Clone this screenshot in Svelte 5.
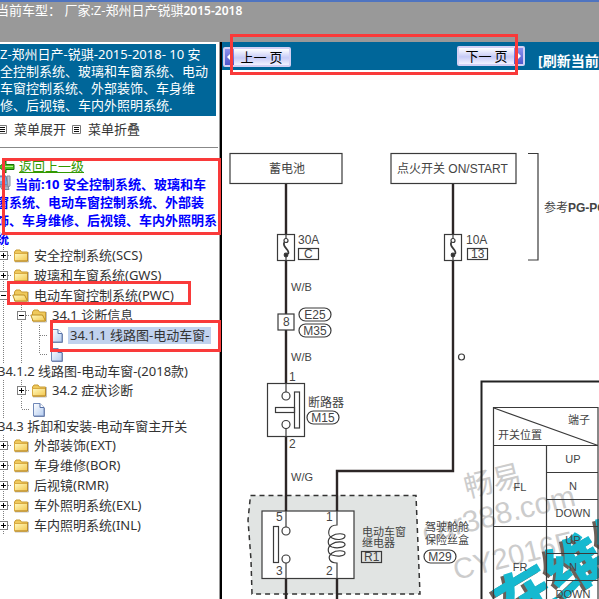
<script>
  const current = ['当前:10 安全控制系统、玻璃和车', '窗系统、电动车窗控制系统、外部装', '饰、车身维修、后视镜、车内外照明系', '统'];

  // cells: v = vertical guide, t = tee, l = elbow, + / - = toggles
  const rows = [
    { cells: ['+'], icon: 'folder', label: '安全控制系统(SCS)' },
    { cells: ['+'], icon: 'folder', label: '玻璃和车窗系统(GWS)' },
    { cells: ['-'], icon: 'open', label: '电动车窗控制系统(PWC)' },
    { cells: ['v', '-'], icon: 'open', label: '34.1 诊断信息' },
    { cells: ['v', 'v', 't'], icon: 'doc', label: '34.1.1 线路图-电动车窗-', selected: true },
    { cells: ['v', 'v', 'l'], icon: 'doc', wrapped: '34.1.2 线路图-电动车窗-(2018款)' },
    { cells: ['v', '+'], icon: 'folder', label: '34.2 症状诊断' },
    { cells: ['v', 'l'], icon: 'doc', wrapped: '34.3 拆卸和安装-电动车窗主开关' },
    { cells: ['+'], icon: 'folder', label: '外部装饰(EXT)' },
    { cells: ['+'], icon: 'folder', label: '车身维修(BOR)' },
    { cells: ['+'], icon: 'folder', label: '后视镜(RMR)' },
    { cells: ['+'], icon: 'folder', label: '车外照明系统(EXL)' },
    { cells: ['+'], icon: 'folder', label: '车内照明系统(INL)' }
  ];

  const positions = [
    { text: 'UP', y: 463 },
    { text: 'N', y: 490 },
    { text: 'DOWN', y: 517 },
    { text: 'UP', y: 544 },
    { text: 'N', y: 571 },
    { text: 'DOWN', y: 598 }
  ];
  const pills = [
    { text: 'E25', x: 299, y: 308 },
    { text: 'M35', x: 299, y: 324 },
    { text: 'M15', x: 307, y: 411 },
    { text: 'M29', x: 424, y: 550 }
  ];
</script>

{#snippet guide(kind)}
  <svg class="guide" viewBox="0 0 18 20" width="18" height="20" aria-hidden="true">
    <path d={kind === 'l' ? 'M9.5 0V10' : 'M9.5 0V20'} />
    {#if kind !== 'v'}<path d="M10 10.5H18" />{/if}
  </svg>
{/snippet}

{#snippet icon(kind)}
  <svg class="icon" viewBox="0 0 18 18" width="18" height="18" aria-hidden="true">
    {#if kind === 'doc'}
      <path d="M3.5 3.5H10L14 7.5V16H3.5Z" fill="url(#paper)" stroke="#7088b8" />
      <path d="M10 3.5V7.5H14" fill="#fff" stroke="#5570a8" />
      <path d="M4 16.5H14.5V8" fill="none" stroke="#40588f" stroke-width=".6" />
    {:else}
      <path d="M3 16H16.5V6" fill="none" stroke="#999" opacity=".6" />
      <path d="M2.5 15V6L4 4H8L9.5 6H15.5V15Z" fill="#efc95b" stroke="#c79a32" />
      {#if kind === 'open'}
        <path d="M3 15L.8 9H12.5L15.5 15Z" fill="url(#gold)" stroke="#bd8e22" />
      {:else}
        <path d="M2.5 7.5H15.5V15H2.5Z" fill="url(#gold)" stroke="#d9ab41" />
        <path d="M3 15H15.5V7" fill="none" stroke="#b98b2e" />
      {/if}
    {/if}
  </svg>
{/snippet}

{#snippet listIcon()}
  <svg viewBox="0 0 9 9" width="9" height="9" aria-hidden="true">
    <path d="M.5 .5H8.5V8.5H.5Z" fill="#fff" stroke="#777" />
    <path d="M2 2.5H7M2 4.5H7M2 6.5H7" stroke="#111" />
  </svg>
{/snippet}

{#snippet fuse(x)}
  <g transform="translate({x} 0)">
    <rect x="-8.5" y="234.5" width="17" height="26" fill="#fff" />
    <path d="M0 235V239M0 255V260" />
    <circle cx="0" cy="240.5" r="2" />
    <path d="M-1.5 242C-5 247 5 250 2 254" stroke-width="1.8" />
    <circle cx="0" cy="255" r="1.8" fill="#333" />
  </g>
{/snippet}

<div class="page">
  <header>当前车型： 厂家:Z-郑州日产锐骐<b>2015-2018</b></header>

  <div class="body">
    <nav>
      <h1>Z-郑州日产-锐骐-2015-2018- 10 安<br />全控制系统、玻璃和车窗系统、电动<br />车窗控制系统、外部装饰、车身维<br />修、后视镜、车内外照明系统.</h1>
      <div class="tools">
        <a href="#expand">{@render listIcon()}菜单展开</a>
        <a href="#collapse">{@render listIcon()}菜单折叠</a>
      </div>

      <div class="crumbs">
        <a class="back" href="#up">
          <svg viewBox="0 0 17 14" width="17" height="14" aria-hidden="true">
            <path d="M1 7L8 1V4.5H16V9.5H8V13Z" fill="#4cc41c" stroke="#1d6b0c" />
            <path d="M4 6.5H15" stroke="#b4f08a" />
          </svg><span>返回上一级</span>
        </a>
        <div class="current">
          <svg viewBox="0 0 18 16" width="18" height="16" aria-hidden="true">
            <path d="M0 1H10L12 10H2Z" fill="#6fa8e6" stroke="#5a6f94" />
            <path d="M2 2.5H8L9 6H3Z" fill="#b9dcfb" />
            <path d="M11 1H14V11L12 12Z" fill="#c7ccd6" stroke="#8790a0" />
            <path d="M4 11H12L13 14.5H6Z" fill="#aab4c6" stroke="#7a8598" />
          </svg>{#each current as line, i}{#if i}<br />{/if}{line}{/each}
        </div>
      </div>

      <ul class="tree">
        {#each rows as row}
          <li>
            <div class="row" class:short={row.wrapped}>
              {#each row.cells as cell}
                {#if cell === '+' || cell === '-'}
                  <button class="toggle" aria-label={cell === '+' ? '展开' : '折叠'}>
                    <svg viewBox="0 0 18 20" width="18" height="20" aria-hidden="true">
                      <path class="dots" d="M9.5 0V20M14 10.5H18" />
                      <rect x="5.5" y="6.5" width="8" height="8" fill="#fff" stroke="#808080" />
                      <path d={cell === '+' ? 'M7 10.5H12M9.5 8V13' : 'M7 10.5H12'} stroke="#000" />
                    </svg>
                  </button>
                {:else}
                  {@render guide(cell)}
                {/if}
              {/each}
              {@render icon(row.icon)}
              {#if row.label}<a href="#doc" class:selected={row.selected}>{row.label}</a>{/if}
            </div>
            {#if row.wrapped}<a class="wrapped" href="#doc">{row.wrapped}</a>{/if}
          </li>
        {/each}
      </ul>
    </nav>

    <main>
      <div class="bar">
        <button class="pager prev"><i><svg viewBox="0 0 9 16" width="9" height="16"><path d="M7 3V13L2 8Z" fill="#fff" /></svg></i><span>上一 页</span></button>
        <button class="pager next"><span>下一 页</span><i><svg viewBox="0 0 9 16" width="9" height="16"><path d="M2 3V13L7 8Z" fill="#fff" /></svg></i></button>
        <a href="#refresh">[刷新当前页]</a>
      </div>

      <div class="sheet">
        <svg class="diagram" viewBox="222 70 400 560" width="400" height="560" role="img" aria-label="线路图">
          <defs>
            <linearGradient id="paper" x1="0" y1="0" x2="1" y2="1"><stop offset="0" stop-color="#fff" /><stop offset="1" stop-color="#b4ccf0" /></linearGradient>
            <linearGradient id="gold" x1="0" y1="0" x2="1" y2="1"><stop offset="0" stop-color="#fffac0" /><stop offset="1" stop-color="#f3c64c" /></linearGradient>
          </defs>

          <g class="mark">
            <text transform="translate(467 498) rotate(-14)" font-size="29">畅易</text>
            <text transform="translate(425 543) rotate(-14)" font-size="30">car388.com</text>
            <text transform="translate(456 580) rotate(-14)" font-size="29">CY2016F</text>
          </g>
          <g class="brand">
            <text class="shade" transform="translate(508 630) rotate(-31)">在维修</text>
            <text transform="translate(511 628) rotate(-31)">在维修</text>
          </g>

          <path d="M250.5 495.5H416L418 545L420 594H252L251 560L248 520Z" fill="#e1e4e3" stroke="#333" stroke-width="1.5" stroke-dasharray="5 4" />

          <g class="thin">
            <rect x="230" y="153.5" width="112" height="30" />
            <rect x="391" y="153.5" width="125" height="30" />
            <path d="M528 153.5H538V260H528" />
            <rect x="298.5" y="248.5" width="20" height="11" />
            <rect x="467.5" y="248.5" width="20" height="11" />
            <rect x="262" y="511" width="92" height="67.5" fill="#fff" />
            <rect x="361.5" y="551.5" width="20" height="11" />
            {#each pills as pill}<rect x={pill.x} y={pill.y} width="32" height="13" rx="6.5" />{/each}
            <circle cx="461.5" cy="357" r="3" />
          </g>

          <g class="wire">
            <path d="M286 184V235M286 260V314M286 330V383M286 437V511M286 579V630" />
            <path d="M453 184V235M453 260V471H337V511M337 579V630" />
          </g>

          <g class="thin">
            {@render fuse(286)}
            {@render fuse(453)}
            <rect x="278" y="314" width="16" height="16" />
            <rect x="267.5" y="383.5" width="37" height="53" />
            <path d="M286 384V392M286 428V437" />
            <circle cx="286" cy="396" r="4" /><circle cx="286" cy="424.5" r="4" />
            <rect x="294.5" y="392" width="5" height="36" />
            <rect x="275.5" y="407.5" width="19" height="5" />
            <path d="M286 511V527M286 563V579" />
            <circle cx="286" cy="531" r="4" /><circle cx="286" cy="559" r="4" />
            <rect x="273.5" y="526.5" width="5" height="36" />
            <path d="M337 511V525C327 525 327 536 332 538C338 541 345 539 345 536C345 533 336 533 332 536C327 539 327 545 332 547C338 549 345 547 345 544.5C345 541 336 541 332 544C327 547 327 553 332 555C338 557 345 556 345 553C345 550 336 550 332 553C327 557 329 563 337 563V579" />
          </g>

          <g class="thin">
            <path d="M493.5 630V407.5H598V630M493.5 445.5H598L494 408M546.5 445V630M546.5 472.5H598M546.5 499.5H598M493.5 526.5H598M546.5 553.5H598M546.5 580.5H598" />
          </g>
          <path d="M481.5 630V381.5H622" fill="none" stroke="#222" stroke-width="2" />

          <g class="label">
            <text x="269" y="173">蓄电池</text>
            <text x="397" y="173">点火开关 ON/START</text>
            <text x="544" y="212">参考<tspan class="strong">PG-POWER</tspan></text>
            <text x="298" y="244">30A</text>
            <text x="304" y="258">C</text>
            <text x="466" y="244">10A</text>
            <text x="471" y="258">13</text>
            <text x="283" y="326">8</text>
            <text x="289" y="381">1</text>
            <text x="289" y="448">2</text>
            <text x="308" y="407">断路器</text>
            <text x="276" y="521">5</text>
            <text x="276" y="575">3</text>
            <text x="326" y="521">1</text>
            <text x="326" y="575">2</text>
            <text x="364" y="561">R1</text>
            {#each pills as pill}<text class="mid" x={pill.x + 16} y={pill.y + 11}>{pill.text}</text>{/each}
          </g>
          <g class="label small">
            <text x="291" y="291">W/B</text>
            <text x="291" y="361">W/B</text>
            <text x="291" y="481">W/G</text>
            <text x="362" y="536">电动车窗</text>
            <text x="362" y="547">继电器</text>
            <text x="425" y="531">驾驶舱舱</text>
            <text x="425" y="544">保险丝盒</text>
            <text x="568" y="424">端子</text>
            <text x="498" y="439">开关位置</text>
            <text class="mid" x="520" y="491">FL</text>
            <text class="mid" x="520" y="571">FR</text>
            {#each positions as p}<text class="mid" x="573" y={p.y}>{p.text}</text>{/each}
          </g>
        </svg>
      </div>
    </main>
  </div>

  <div class="note note-pager"></div>
  <div class="note note-current"></div>
  <div class="note note-group"></div>
  <div class="note note-doc"></div>
</div>

<style>
  :global(body) { margin: 0; background: #fff; }
  .page {
    position: relative;
    display: flex;
    flex-direction: column;
    height: 100vh;
    overflow: hidden;
    font: 13px/17px "Noto Sans", "Noto Sans CJK SC", sans-serif;
    color: #333;
  }
  header {
    box-sizing: border-box;
    flex: none;
    height: 42px;
    border-top: 2px solid #4f74c0;
    background: #999;
    color: #fff;
    text-indent: -4px;
    white-space: pre;
  }
  header b { font-size: 12px; font-weight: 600; }
  .body { display: flex; flex: 1; min-height: 0; }
  nav {
    box-sizing: border-box;
    flex: none;
    width: 222px;
    overflow: hidden;
    border-right: 2px solid #000;
    box-shadow: inset -1px 0 #999;
    white-space: nowrap;
  }
  a { color: inherit; text-decoration: none; }
  h1 {
    margin: 2px 4px 0 0;
    padding: 2px 0;
    background: #069;
    color: #fff;
    font-size: 13px;
    font-weight: 400;
    line-height: 17px;
  }
  .tools {
    display: flex;
    gap: 6px;
    height: 31px;
    margin: 0 2px 0 -2px;
    border-bottom: 1px solid #888;
  }
  .tools a { display: flex; align-items: center; gap: 7px; height: 26px; }
  .crumbs { margin-left: -4px; padding-top: 10px; }
  .back { display: flex; align-items: center; gap: 4px; height: 17px; margin-left: 2px; color: #390; }
  .back span { text-decoration: underline; }
  .current { color: #00f; font-weight: 700; line-height: 18px; }
  .current svg { vertical-align: top; margin-right: 1px; }
  .tree { list-style: none; margin: -2px 0 0 -6px; padding: 0; }
  .row { display: flex; align-items: center; height: 20px; overflow: hidden; }
  .row.short { height: 18px; }
  .row a { margin-left: 2px; padding: 0 2px; }
  .row a.selected { background: #c1d2ee; }
  .wrapped { display: block; margin-left: 4px; height: 17px; }
  .toggle { display: block; width: 18px; height: 20px; padding: 0; border: 0; background: none; }
  .toggle svg { display: block; }
  .guide, .icon { flex: none; }
  .guide path, .dots { fill: none; stroke: #808080; stroke-dasharray: 1 1; }

  main { display: flex; flex-direction: column; flex: 1; min-width: 0; }
  .bar {
    display: flex;
    align-items: flex-start;
    flex: none;
    box-sizing: border-box;
    height: 28px;
    padding: 4px 0 0 1px;
    background: #069;
    color: #fff;
    font-size: 14px;
    font-weight: 700;
    white-space: nowrap;
    overflow: hidden;
  }
  .bar a { margin: 6px 0 0 13px; }
  .pager {
    display: flex;
    box-sizing: border-box;
    flex: none;
    width: 68px;
    height: 20px;
    padding: 0;
    border: 2px solid #d3d0f4;
    border-radius: 2px;
    background: linear-gradient(#fff, #c6caf6 55%, #f2f2ff);
    color: #000;
    font: 400 13px/15px "Noto Sans CJK SC", sans-serif;
  }
  .pager i { display: flex; width: 9px; background: linear-gradient(#8d92ee, #5058cc); }
  .pager span { flex: 1; text-align: center; }
  .prev { margin-top: 1px; }
  .next { margin-left: 166px; }
  .sheet { flex: 1; overflow: hidden; }
  .diagram { display: block; }
  .thin { fill: none; stroke: #3a3a3a; stroke-width: 1.2px; }
  .wire { fill: none; stroke: #2c2626; stroke-width: 2.4px; }
  .label { fill: #444; font: 12px "Liberation Sans", "Noto Sans CJK SC", sans-serif; }
  .small { font-size: 11px; }
  .strong { font-weight: 700; }
  .mid { text-anchor: middle; }
  .mark { fill: #ccc; font-family: "Liberation Sans", "Noto Sans CJK SC", sans-serif; }
  .brand { fill: #16b9d0; font: 900 58px "Noto Sans CJK SC", sans-serif; }
  .shade { fill: #6b5f58; }

  .note { position: absolute; box-sizing: border-box; border: 3px solid #f93a3a; pointer-events: none; }
  .note-pager { left: 230px; top: 34px; width: 288px; height: 41px; }
  .note-current { left: 2px; top: 158px; width: 219px; height: 77px; }
  .note-group { left: 7px; top: 281px; width: 184px; height: 24px; }
  .note-doc { left: 50px; top: 320px; width: 171px; height: 32px; }
</style>
